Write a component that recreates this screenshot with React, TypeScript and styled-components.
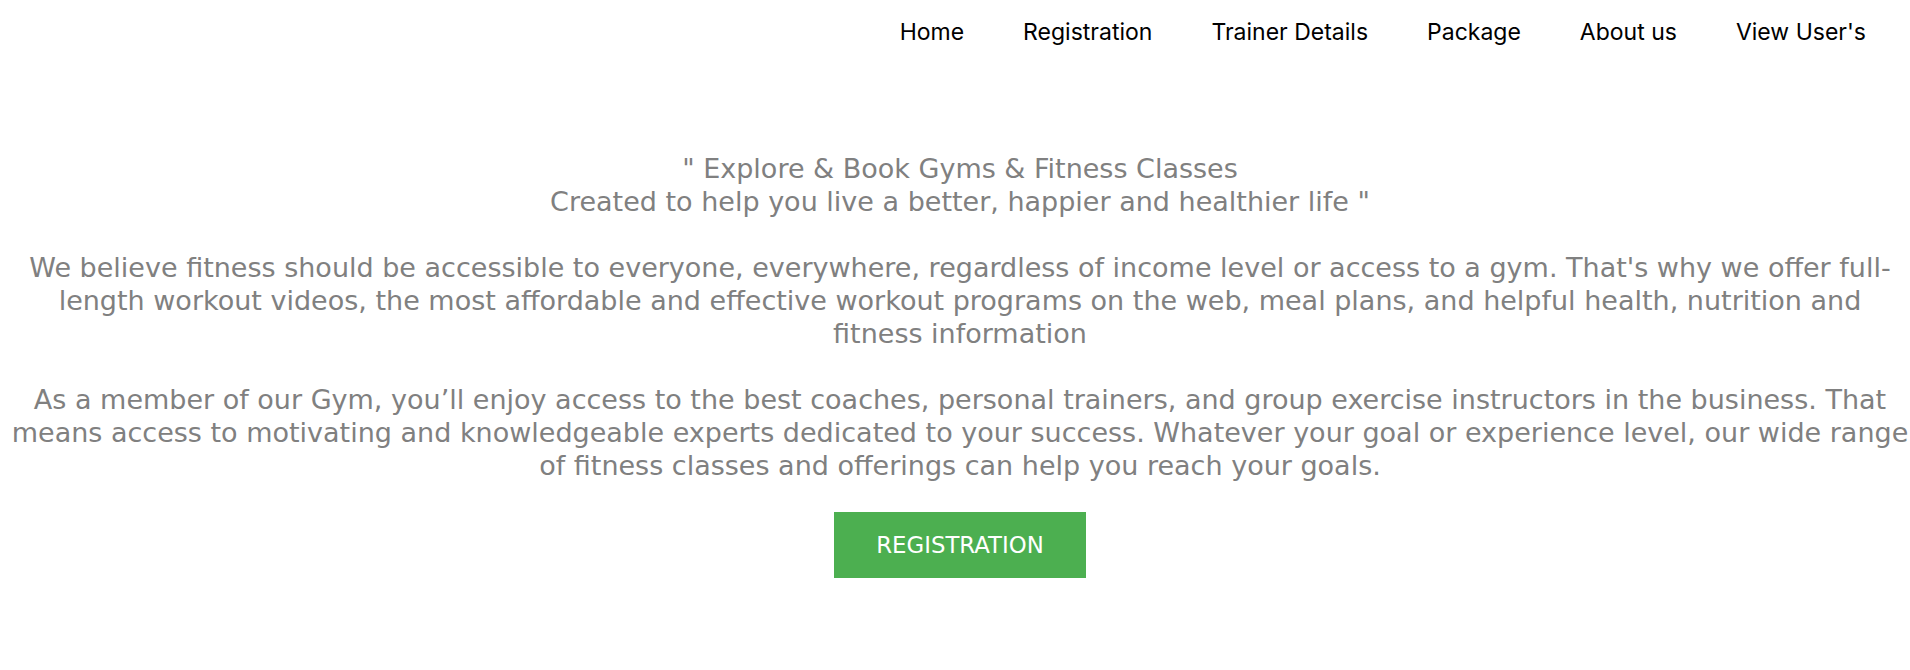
import React from "react";
import styled, { createGlobalStyle } from "styled-components";

const Global = createGlobalStyle`
  html, body { margin: 0; padding: 0; background: #ffffff; }
  body { font-family: "DejaVu Sans", Verdana, sans-serif; }
`;

const Page = styled.div`
  width: 1910px;
  min-height: 670px;
  display: flex;
  flex-direction: column;
`;

const Nav = styled.nav`
  display: flex;
  justify-content: flex-end;
  align-items: center;
  gap: 59px;
  padding: 16px 44px 0 0;
  height: 32px;
`;

const NavLink = styled.a`
  font-family: Inter, "Open Sans", sans-serif;
  color: #000000;
  font-size: 23px;
  line-height: 32px;
  text-decoration: none;
  white-space: nowrap;
`;

const Main = styled.main`
  display: flex;
  flex-direction: column;
  align-items: center;
  padding: 104px 0 0 10px;
  text-align: center;
  color: #808080;
  font-size: 27px;
  line-height: 33px;
`;

const Para = styled.p`
  margin: 0 0 33px;
`;

const Button = styled.button`
  margin-top: -3px;
  background: #4caf50;
  color: #ffffff;
  border: none;
  font-family: "DejaVu Sans", Verdana, sans-serif;
  font-size: 22.8px;
  line-height: 30px;
  padding: 18px 42px;
  cursor: pointer;
`;

const links = ["Home", "Registration", "Trainer Details", "Package", "About us", "View User's"];

export default function App() {
  return (
    <Page>
      <Global />
      <Nav>
        {links.map((l) => (
          <NavLink key={l} href="#">{l}</NavLink>
        ))}
      </Nav>
      <Main>
        <Para>
          " Explore &amp; Book Gyms &amp; Fitness Classes
          <br />
          Created to help you live a better, happier and healthier life "
        </Para>
        <Para>
          We believe fitness should be accessible to everyone, everywhere, regardless of income level or access to a gym. That's why we offer full-length workout videos, the most affordable and effective workout programs on the web, meal plans, and helpful health, nutrition and fitness information
        </Para>
        <Para>
          As a member of our Gym, you’ll enjoy access to the best coaches, personal trainers, and group exercise instructors in the business. That means access to motivating and knowledgeable experts dedicated to your success. Whatever your goal or experience level, our wide range of fitness classes and offerings can help you reach your goals.
        </Para>
        <Button>REGISTRATION</Button>
      </Main>
    </Page>
  );
}
